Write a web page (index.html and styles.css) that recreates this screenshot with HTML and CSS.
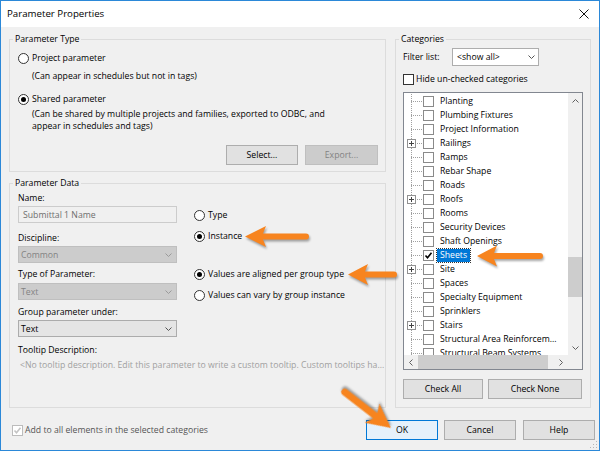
FILE: index.html
```html
<!DOCTYPE html>
<html>
<head>
<meta charset="utf-8">
<title>Parameter Properties</title>
<link rel="stylesheet" href="styles.css">
</head>
<body>
<div class="window">
  <div class="titlebar">
    <span class="title">Parameter Properties</span>
    <svg class="close" width="10" height="10" viewBox="0 0 10 10"><path d="M0.5 0.5 L9.5 9.5 M9.5 0.5 L0.5 9.5"/></svg>
  </div>
  <div class="client">
    <div class="columns">
      <div class="left">
        <fieldset class="group ptype">
          <legend>Parameter Type</legend>
          <div class="ptype-body">
            <div class="opt"><span class="radio"></span>Project parameter</div>
            <div class="desc d1">(Can appear in schedules but not in tags)</div>
            <div class="opt o2"><span class="radio on"></span>Shared parameter</div>
            <div class="desc d2">(Can be shared by multiple projects and families, exported to ODBC, and<br>appear in schedules and tags)</div>
            <div class="btnrow">
              <span class="btn w72">Select...</span>
              <span class="btn w73 disabled">Export...</span>
            </div>
          </div>
        </fieldset>
        <fieldset class="group pdata">
          <legend>Parameter Data</legend>
          <div class="pdata-body">
            <div class="dcols">
              <div class="dleft">
                <div class="lbl">Name:</div>
                <div class="field textbox">Submittal 1 Name</div>
                <div class="lbl l2">Discipline:</div>
                <div class="field combo disabled"><span>Common</span><svg class="chev" width="7" height="4" viewBox="0 0 7 4"><path d="M0.5 0.5 L3.5 3.5 L6.5 0.5"/></svg></div>
                <div class="lbl l3">Type of Parameter:</div>
                <div class="field combo disabled c3"><span>Text</span><svg class="chev" width="7" height="4" viewBox="0 0 7 4"><path d="M0.5 0.5 L3.5 3.5 L6.5 0.5"/></svg></div>
                <div class="lbl l4">Group parameter under:</div>
                <div class="field combo"><span>Text</span><svg class="chev dark" width="7" height="4" viewBox="0 0 7 4"><path d="M0.5 0.5 L3.5 3.5 L6.5 0.5"/></svg></div>
              </div>
              <div class="dright">
                <div class="opt r1"><span class="radio"></span>Type</div>
                <div class="opt r2"><span class="radio on"></span>Instance</div>
                <div class="opt r3"><span class="radio on"></span>Values are aligned per group type</div>
                <div class="opt r4"><span class="radio"></span>Values can vary by group instance</div>
              </div>
            </div>
            <div class="lbl tt">Tooltip Description:</div>
            <div class="tooltip">&lt;No tooltip description. Edit this parameter to write a custom tooltip. Custom tooltips ha...</div>
          </div>
        </fieldset>
      </div>
      <fieldset class="group cats">
        <legend>Categories</legend>
        <div class="cats-body">
          <div class="filter">
            <span class="flabel">Filter list:</span>
            <span class="select"><span>&lt;show all&gt;</span><svg class="chev" width="7" height="4" viewBox="0 0 7 4"><path d="M0.5 0.5 L3.5 3.5 L6.5 0.5"/></svg></span>
          </div>
          <div class="hide"><span class="cb dark"></span>Hide un-checked categories</div>
          <div class="listbox">
            <div class="items">
              <div class="item"><span class="tree"></span><span class="cb"></span><span class="name">Planting</span></div>
              <div class="item"><span class="tree"></span><span class="cb"></span><span class="name">Plumbing Fixtures</span></div>
              <div class="item"><span class="tree"></span><span class="cb"></span><span class="name">Project Information</span></div>
              <div class="item"><span class="tree"><span class="plus"></span></span><span class="cb"></span><span class="name">Railings</span></div>
              <div class="item"><span class="tree"></span><span class="cb"></span><span class="name">Ramps</span></div>
              <div class="item"><span class="tree"></span><span class="cb"></span><span class="name">Rebar Shape</span></div>
              <div class="item"><span class="tree"></span><span class="cb"></span><span class="name">Roads</span></div>
              <div class="item"><span class="tree"><span class="plus"></span></span><span class="cb"></span><span class="name">Roofs</span></div>
              <div class="item"><span class="tree"></span><span class="cb"></span><span class="name">Rooms</span></div>
              <div class="item"><span class="tree"></span><span class="cb"></span><span class="name">Security Devices</span></div>
              <div class="item"><span class="tree"></span><span class="cb"></span><span class="name">Shaft Openings</span></div>
              <div class="item"><span class="tree"></span><span class="cb"><svg width="9" height="9" viewBox="0 0 9 9"><path class="tick" d="M1.5 4.5 L3.5 6.8 L7.5 1.8"/></svg></span><span class="name sel">Sheets</span></div>
              <div class="item"><span class="tree"><span class="plus"></span></span><span class="cb"></span><span class="name">Site</span></div>
              <div class="item"><span class="tree"></span><span class="cb"></span><span class="name">Spaces</span></div>
              <div class="item"><span class="tree"></span><span class="cb"></span><span class="name">Specialty Equipment</span></div>
              <div class="item"><span class="tree"></span><span class="cb"></span><span class="name">Sprinklers</span></div>
              <div class="item"><span class="tree"><span class="plus"></span></span><span class="cb"></span><span class="name">Stairs</span></div>
              <div class="item"><span class="tree"></span><span class="cb"></span><span class="name">Structural Area Reinforcem...</span></div>
              <div class="item"><span class="tree"></span><span class="cb"></span><span class="name">Structural Beam Systems</span></div>
            </div>
            <div class="vscroll">
              <span class="sbtn"><svg width="7" height="4" viewBox="0 0 7 4"><path d="M0.5 3.5 L3.5 0.5 L6.5 3.5"/></svg></span>
              <span class="vtrack"><span class="vthumb"></span></span>
              <span class="sbtn"><svg width="7" height="4" viewBox="0 0 7 4"><path d="M0.5 0.5 L3.5 3.5 L6.5 0.5"/></svg></span>
            </div>
            <div class="hscroll">
              <span class="hbtn"><svg width="4" height="7" viewBox="0 0 4 7"><path d="M3.5 0.5 L0.5 3.5 L3.5 6.5"/></svg></span>
              <span class="htrack"><span class="hthumb"></span></span>
              <span class="hbtn"><svg width="4" height="7" viewBox="0 0 4 7"><path d="M0.5 0.5 L3.5 3.5 L0.5 6.5"/></svg></span>
            </div>
            <div class="corner"></div>
          </div>
          <div class="checkbtns">
            <span class="btn ca">Check All</span>
            <span class="btn cn">Check None</span>
          </div>
        </div>
      </fieldset>
    </div>
    <div class="footer">
      <span class="cb addcb"><svg width="9" height="9" viewBox="0 0 9 9"><path class="tick light" d="M1.5 4.5 L3.5 6.8 L7.5 1.8"/></svg></span>
      <span class="addtxt">Add to all elements in the selected categories</span>
      <span class="spacer"></span>
      <span class="btn ok">OK</span>
      <span class="btn cancel">Cancel</span>
      <span class="btn help">Help</span>
    </div>
  </div>
  <svg class="grip" width="8" height="8" viewBox="0 0 8 8"><rect x="6" y="0" width="1" height="1"/><rect x="3" y="3" width="1" height="1"/><rect x="6" y="3" width="1" height="1"/><rect x="0" y="6" width="1" height="1"/><rect x="3" y="6" width="1" height="1"/><rect x="6" y="6" width="1" height="1"/></svg>
  <svg class="arrows" width="600" height="451" viewBox="0 0 600 451">
    <g transform="translate(245 236.5)"><path class="arrow" d="M0 0 L21 -10.5 L18 -3 L61 -3 A3 3 0 0 1 61 3 L18 3 L21 10.5 Z"/></g>
    <g transform="translate(348 274.5)"><path class="arrow" d="M0 0 L20 -10.5 L17 -3 L46 -3 A3 3 0 0 1 46 3 L17 3 L20 10.5 Z"/></g>
    <g transform="translate(477 256)"><path class="arrow" d="M0 0 L20 -10.5 L17 -3 L63 -3 A3 3 0 0 1 63 3 L17 3 L20 10.5 Z"/></g>
    <g transform="translate(391 428) rotate(217.8)"><path class="arrow" d="M0 0 L24 -12 L20 -3.5 L58.5 -3.5 A3.5 3.5 0 0 1 58.5 3.5 L20 3.5 L24 12 Z"/></g>
  </svg>
</div>
</body>
</html>
```

FILE: styles.css
```css
* { box-sizing: border-box; }
html, body { margin: 0; padding: 0; }
body {
  width: 600px;
  height: 451px;
  overflow: hidden;
  background: #f0f0f0;
  font-family: "Open Sans", "Noto Sans", sans-serif;
  font-size: 8.7px;
  line-height: 14px;
  color: #000;
}
.window {
  position: relative;
  width: 600px;
  height: 451px;
  border: 1px solid #2b88d8;
  background: #f0f0f0;
  display: flex;
  flex-direction: column;
}
.titlebar {
  flex: none;
  height: 26px;
  background: #fff;
  display: flex;
  align-items: center;
  justify-content: space-between;
  padding: 0 10px 0 6px;
}
.title { font-size: 9.7px; }
.close { display: block; }
.close path { stroke: #111; stroke-width: 1; fill: none; }

.client {
  flex: 1;
  display: flex;
  flex-direction: column;
  padding: 5px 8px 0 8px;
}
.columns { display: flex; gap: 9px; height: 376px; flex: none; }
.left { width: 377px; flex: none; display: flex; flex-direction: column; }

.group { margin: 0; padding: 0; border: 1px solid #dcdcdc; min-width: 0; }
.group legend { margin-left: 3px; padding: 0 2px; line-height: 14px; }

.ptype { flex: none; }
.ptype-body { padding: 5px 7px 6px 8px; }
.opt { display: flex; align-items: center; height: 14px; white-space: nowrap; }
.radio {
  flex: none;
  width: 11px;
  height: 11px;
  border: 1px solid #333;
  border-radius: 50%;
  background: #fff;
  margin-right: 3px;
  display: flex;
  align-items: center;
  justify-content: center;
}
.radio.on::after { content: ""; width: 5px; height: 5px; border-radius: 50%; background: #000; }
.desc { padding-left: 14px; line-height: 12px; }
.d1 { margin-top: 5px; }
.o2 { margin-top: 10px; }
.d2 { margin-top: 2px; }
.btnrow { display: flex; justify-content: flex-end; gap: 7px; margin-top: 13px; }

.btn {
  flex: none;
  height: 20px;
  border: 1px solid #adadad;
  background: #e1e1e1;
  display: flex;
  align-items: center;
  justify-content: center;
  white-space: nowrap;
}
.btn.disabled { background: #cccccc; border-color: #bfbfbf; color: #838383; }
.w72 { width: 72px; }
.w73 { width: 73px; }

.pdata { flex: 1; margin-top: 4px; }
.pdata-body { padding: 1px 7px 0 8px; }
.dcols { display: flex; gap: 17px; }
.dleft { width: 159px; flex: none; }
.lbl { height: 14px; line-height: 14px; white-space: nowrap; }
.field {
  height: 17px;
  margin-top: 1px;
  border: 1px solid #cccccc;
  display: flex;
  align-items: center;
  justify-content: space-between;
  white-space: nowrap;
}
.textbox { background: #f0f0f0; color: #6d6d6d; padding-left: 4px; }
.combo { background: #e5e5e5; border-color: #acacac; padding: 0 4px 0 2px; }
.combo.disabled { background: #cccccc; border-color: #bfbfbf; color: #838383; }
.c3 { margin-top: 2px; }
.l2 { margin-top: 8px; }
.l3 { margin-top: 4px; }
.l4 { margin-top: 5px; }
.chev { display: block; flex: none; }
.chev path { fill: none; stroke: #9a9a9a; stroke-width: 1; }
.chev.dark path { stroke: #555; }
.select .chev path { stroke: #555; }

.r1 { margin-top: 17px; }
.r2 { margin-top: 7px; }
.r3 { margin-top: 24px; }
.r4 { margin-top: 7px; }

.tt { margin-top: 6px; }
.tooltip {
  margin-top: 1px;
  padding-left: 2px;
  color: #a0a0a0;
  white-space: nowrap;
}

.cats { width: 196px; flex: none; }
.cats-body { padding: 2px 7px 0 7px; }
.filter { display: flex; align-items: center; height: 18px; }
.flabel { width: 49px; flex: none; }
.select {
  width: 87px;
  height: 18px;
  border: 1px solid #adadad;
  background: #fff;
  display: flex;
  align-items: center;
  justify-content: space-between;
  padding: 0 3px 0 4px;
}
.hide { display: flex; align-items: center; height: 14px; margin-top: 6px; white-space: nowrap; }
.cb {
  flex: none;
  width: 11px;
  height: 11px;
  border: 1px solid #8a8a8a;
  background: #fff;
  display: flex;
  align-items: center;
  justify-content: center;
}
.cb svg { display: block; }
.cb.dark { border-color: #333; margin-right: 2px; }
.tick { fill: none; stroke: #000; stroke-width: 1.6; }
.tick.light { stroke: #c4c4c4; }

.listbox {
  margin-top: 6px;
  width: 180px;
  height: 278px;
  border: 1px solid #828790;
  background: #fff;
  display: grid;
  grid-template-columns: 1fr 14px;
  grid-template-rows: 1fr 14px;
}
.items { overflow: hidden; padding-top: 1px; min-width: 0; min-height: 0; }
.item { display: flex; align-items: center; height: 14px; white-space: nowrap; }
.tree {
  flex: none;
  width: 19px;
  height: 14px;
  display: flex;
  align-items: center;
  background-image:
    repeating-linear-gradient(to bottom, #a0a0a0 0 1px, transparent 1px 2px),
    repeating-linear-gradient(to right, #a0a0a0 0 1px, transparent 1px 2px);
  background-size: 1px 14px, 12px 1px;
  background-position: 7px 0, 7px 7px;
  background-repeat: no-repeat;
}
.plus {
  width: 9px;
  height: 9px;
  margin-left: 3px;
  border: 1px solid #919191;
  background:
    linear-gradient(#444, #444) center / 5px 1px no-repeat,
    linear-gradient(#444, #444) center / 1px 5px no-repeat,
    #fff;
}
.name { margin-left: 3px; padding: 0 3px; height: 13px; line-height: 13px; }
.name.sel { background: #0078d7; color: #fff; outline: 1px dotted #333; outline-offset: 0; }

.vscroll { background: #f0f0f0; display: flex; flex-direction: column; min-height: 0; }
.sbtn { flex: none; height: 15px; display: flex; align-items: center; justify-content: center; }
.sbtn path, .hbtn path { fill: none; stroke: #606060; stroke-width: 1; }
.vtrack { flex: 1; display: block; }
.vthumb { display: block; margin-top: 149px; height: 40px; background: #cdcdcd; }
.hscroll { background: #f0f0f0; display: flex; min-width: 0; }
.hbtn { flex: none; width: 14px; display: flex; align-items: center; justify-content: center; }
.htrack { flex: 1; display: flex; }
.hthumb { width: 130px; background: #cdcdcd; }
.corner { background: #f0f0f0; }

.checkbtns { display: flex; gap: 5px; margin-top: 9px; }
.ca { width: 80px; }
.cn { width: 94px; }

.footer {
  flex: none;
  display: flex;
  align-items: center;
  height: 20px;
  margin-top: 12px;
  margin-right: -4px;
  white-space: nowrap;
}
.addcb { margin-left: 3px; margin-right: 2px; border-color: #bcbcbc; }
.addtxt { color: #555; }
.spacer { flex: 1; }
.btn.ok { width: 72px; background: #e5f1fb; border-color: #0078d7; }
.cancel { width: 72px; margin-left: 6px; }
.help { width: 72px; margin-left: 7px; }

.grip { position: absolute; right: 1px; bottom: 1px; fill: #b5b5b5; }
.arrows { position: absolute; left: -1px; top: -1px; pointer-events: none; }
.arrow { fill: #f7841f; filter: drop-shadow(1px 2px 1.2px rgba(0, 0, 0, 0.35)); }
```
